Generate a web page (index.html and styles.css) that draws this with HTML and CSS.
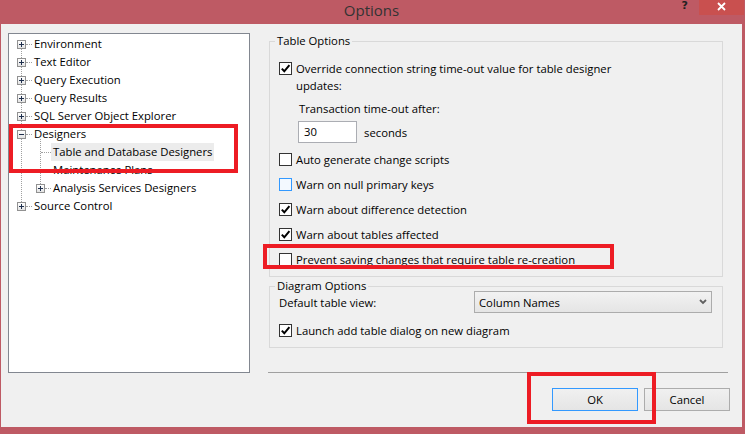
FILE: index.html
```html
<!DOCTYPE html>
<html lang="en">
<head>
    <meta charset="UTF-8">
    <title>Options</title>
    <link rel="stylesheet" href="styles.css">
</head>
<body>

    <div class="window">
        <div class="titlebar">
            <span></span>
            <div class="title">Options</div>
            <div class="caption-buttons">
                <span class="help">?</span>
                <span class="close">
                    <svg width="9" height="9" viewBox="0 0 9 9"><path d="M1 1 L8 8 M8 1 L1 8" stroke="#fff" stroke-width="1.8" fill="none"/></svg>
                </span>
            </div>
        </div>

        <div class="dialog">
            <div class="tree-pane">
                <div class="tree">
                    <div class="row"><span class="expander plus"></span><span class="dots"></span><span class="label">Environment</span></div>
                    <div class="row"><span class="expander plus"></span><span class="dots"></span><span class="label">Text Editor</span></div>
                    <div class="row"><span class="expander plus"></span><span class="dots"></span><span class="label">Query Execution</span></div>
                    <div class="row"><span class="expander plus"></span><span class="dots"></span><span class="label">Query Results</span></div>
                    <div class="row"><span class="expander plus"></span><span class="dots"></span><span class="label">SQL Server Object Explorer</span></div>
                    <div class="row"><span class="expander"></span><span class="dots"></span><span class="label">Designers</span></div>
                    <div class="children">
                        <div class="row child"><span class="dots leaf"></span><span class="label selected">Table and Database Designers</span></div>
                        <div class="row child"><span class="dots leaf"></span><span class="label">Maintenance Plans</span></div>
                        <div class="row child"><span class="expander plus"></span><span class="dots"></span><span class="label">Analysis Services Designers</span></div>
                    </div>
                    <div class="row"><span class="expander plus"></span><span class="dots"></span><span class="label">Source Control</span></div>
                </div>
            </div>

            <div class="settings">
                <fieldset class="group table-options">
                    <legend>Table Options</legend>
                    <div class="check">
                        <span class="box"><svg width="11" height="11" viewBox="0 0 11 11"><path d="M1.8 5.6 L4.3 8.3 L9.4 2.2" stroke="#000" stroke-width="2" fill="none"/></svg></span>
                        <span>Override connection string time-out value for table designer<br>updates:</span>
                    </div>
                    <div class="timeout-label">Transaction time-out after:</div>
                    <div class="timeout-row">
                        <span class="textbox">30</span>
                        <span>seconds</span>
                    </div>
                    <div class="check spaced">
                        <span class="box"></span>
                        <span>Auto generate change scripts</span>
                    </div>
                    <div class="check spaced">
                        <span class="box hover"></span>
                        <span>Warn on null primary keys</span>
                    </div>
                    <div class="check spaced">
                        <span class="box"><svg width="11" height="11" viewBox="0 0 11 11"><path d="M1.8 5.6 L4.3 8.3 L9.4 2.2" stroke="#000" stroke-width="2" fill="none"/></svg></span>
                        <span>Warn about difference detection</span>
                    </div>
                    <div class="check spaced">
                        <span class="box"><svg width="11" height="11" viewBox="0 0 11 11"><path d="M1.8 5.6 L4.3 8.3 L9.4 2.2" stroke="#000" stroke-width="2" fill="none"/></svg></span>
                        <span>Warn about tables affected</span>
                    </div>
                    <div class="check spaced">
                        <span class="box"></span>
                        <span>Prevent saving changes that require table re-creation</span>
                    </div>
                </fieldset>

                <fieldset class="group diagram-options">
                    <legend>Diagram Options</legend>
                    <div class="view-row">
                        <span class="view-label">Default table view:</span>
                        <span class="combo">
                            <span>Column Names</span>
                            <svg width="8" height="6" viewBox="0 0 8 6"><path d="M1 1 L4 4 L7 1" stroke="#606060" stroke-width="1.8" fill="none"/></svg>
                        </span>
                    </div>
                    <div class="check launch">
                        <span class="box"><svg width="11" height="11" viewBox="0 0 11 11"><path d="M1.8 5.6 L4.3 8.3 L9.4 2.2" stroke="#000" stroke-width="2" fill="none"/></svg></span>
                        <span>Launch add table dialog on new diagram</span>
                    </div>
                </fieldset>

                <div class="separator"></div>

                <div class="buttons">
                    <button class="btn default">OK</button>
                    <button class="btn">Cancel</button>
                </div>
            </div>
        </div>

        <!-- red highlight boxes drawn over the screenshot -->
        <div class="mark mark-tree"></div>
        <div class="mark mark-prevent"></div>
        <div class="mark mark-ok"></div>
    </div>

</body>
</html>
```

FILE: styles.css
```css
body {
    margin: 0;
    font-family: "Open Sans", "Noto Sans", sans-serif;
    font-size: 11.3px;
    color: #000;
}

.window {
    position: relative;
    width: 745px;
    height: 434px;
    box-sizing: border-box;
    padding: 0 3px 7px 1px;
    background-color: #be5a64;
    display: flex;
    flex-direction: column;
}

.titlebar {
    height: 24px;
    display: grid;
    grid-template-columns: 1fr auto 1fr;
}

.title {
    font-size: 15px;
    color: #333;
    line-height: 21px;
}

.caption-buttons {
    display: flex;
    justify-content: flex-end;
    margin-right: -2px;
}

.help {
    font-family: "DejaVu Sans", sans-serif;
    font-weight: bold;
    font-size: 11px;
    line-height: 11px;
    color: #222;
    margin-right: 11px;
}

.close {
    width: 45px;
    height: 15px;
    background-color: #c9504f;
    display: flex;
    justify-content: center;
    padding-top: 2px;
    box-sizing: border-box;
}

.dialog {
    flex: 1;
    display: flex;
    background-color: #f0f0f0;
}

/* tree */

.tree-pane {
    padding: 9px 0 0 7px;
}

.tree {
    position: relative;
    width: 242px;
    height: 340px;
    box-sizing: border-box;
    border: 1px solid #828790;
    background-color: #fff;
    padding-top: 1px;
}

.tree::before {
    content: "";
    position: absolute;
    left: 12px;
    top: 10px;
    height: 162px;
    border-left: 1px dotted #a0a0a0;
}

.row {
    height: 18px;
    display: flex;
    align-items: center;
    padding-left: 8px;
    white-space: nowrap;
}

.row.child {
    padding-left: 27px;
}

.children {
    position: relative;
}

.children::before {
    content: "";
    position: absolute;
    left: 31px;
    top: -4px;
    height: 49px;
    border-left: 1px dotted #a0a0a0;
}

.expander {
    position: relative;
    z-index: 1;
    width: 9px;
    height: 9px;
    box-sizing: border-box;
    border: 1px solid #919191;
    background: linear-gradient(#fff, #e3e3e3);
}

.expander::before {
    content: "";
    position: absolute;
    left: 1px;
    top: 3px;
    width: 5px;
    height: 1px;
    background-color: #1e2f4d;
}

.expander.plus::after {
    content: "";
    position: absolute;
    left: 3px;
    top: 1px;
    width: 1px;
    height: 5px;
    background-color: #1e2f4d;
}

.dots {
    width: 6px;
    border-top: 1px dotted #a0a0a0;
}

.dots.leaf {
    width: 10px;
    margin-left: 5px;
}

.label {
    padding: 0 2px;
    line-height: 18px;
}

.label.selected {
    background-color: #ececec;
}

/* right side */

.settings {
    flex: 1;
    padding: 10px 0 0 18px;
}

.group {
    margin: 0 19px 0 1px;
    padding: 12px 10px 8px 9px;
    border: 1px solid #d9d9d9;
    min-width: 0;
}

.group legend {
    padding: 0 2px;
    margin-left: -4px;
    line-height: 14px;
}

.diagram-options {
    margin-top: 2px;
    padding-top: 0;
}

.check {
    display: flex;
    align-items: flex-start;
    gap: 4px;
    line-height: 17px;
    white-space: nowrap;
}

.check.spaced {
    margin-top: 8px;
}

.box {
    width: 13px;
    height: 13px;
    margin-top: 2px;
    box-sizing: border-box;
    border: 1px solid #333;
    background-color: #fff;
    display: flex;
    align-items: center;
    justify-content: center;
    flex-shrink: 0;
}

.box.hover {
    border-color: #3399ff;
    background-color: #f3f9ff;
}

.timeout-label {
    margin-top: 6px;
    padding-left: 20px;
    line-height: 17px;
}

.timeout-row {
    margin-top: 4px;
    padding-left: 19px;
    display: flex;
    align-items: center;
    gap: 7px;
}

.textbox {
    width: 59px;
    height: 22px;
    box-sizing: border-box;
    border: 1px solid #abadb3;
    background-color: #fff;
    padding-left: 5px;
    line-height: 20px;
}

.check.spaced:nth-of-type(1) {
    margin-top: 8px;
}

.view-row {
    margin-top: -2px;
    display: flex;
    align-items: center;
}

.view-label {
    flex: 1;
}

.combo {
    width: 238px;
    height: 22px;
    box-sizing: border-box;
    border: 1px solid #acacac;
    background: linear-gradient(#f2f2f2, #e5e5e5);
    display: flex;
    align-items: center;
    justify-content: space-between;
    padding: 0 4px 0 4px;
}

.check.launch {
    margin-top: 9px;
}

.separator {
    margin: 24px 14px 0 0;
    border-top: 1px solid #a0a0a0;
}

.buttons {
    display: flex;
    justify-content: flex-end;
    gap: 6px;
    margin: 15px 12px 0 0;
}

.btn {
    width: 86px;
    height: 23px;
    padding: 0;
    border: 1px solid #acacac;
    background: linear-gradient(#f0f0f0, #e5e5e5);
    font-family: inherit;
    font-size: inherit;
    color: #000;
}

.btn.default {
    border-color: #3399ff;
}

/* red highlight boxes */

.mark {
    position: absolute;
    box-sizing: border-box;
    border: 4px solid #ed1c24;
}

.mark-tree {
    left: 9px;
    top: 124px;
    width: 229px;
    height: 49px;
}

.mark-prevent {
    left: 263px;
    top: 244px;
    width: 351px;
    height: 25px;
}

.mark-ok {
    left: 527px;
    top: 372px;
    width: 129px;
    height: 52px;
}
```
